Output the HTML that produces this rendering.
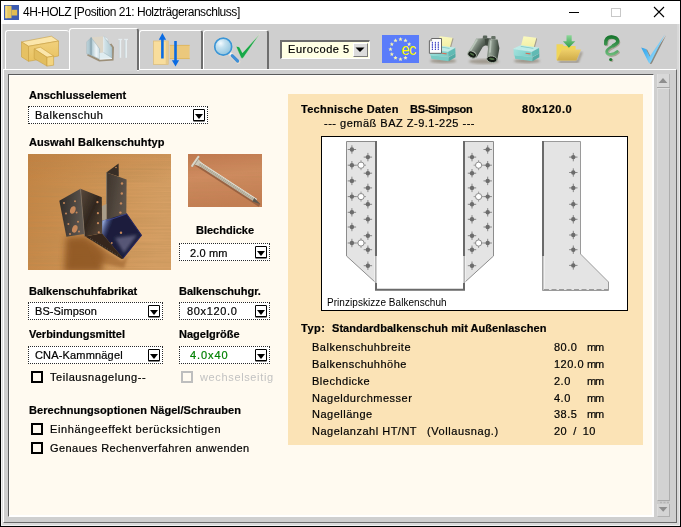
<!DOCTYPE html>
<html><head><meta charset="utf-8">
<style>
*{box-sizing:border-box;margin:0;padding:0}
html,body{width:681px;height:527px;overflow:hidden;background:#cfcfcf}
body{position:relative;font-family:"Liberation Sans",sans-serif;font-size:11px;color:#000}
.abs{position:absolute}
svg{position:absolute;overflow:visible}
#title{position:absolute;left:1px;top:1px;width:679px;height:23px;background:#fff}
#title .t{position:absolute;left:22px;top:4px;font-size:12px;color:#000;white-space:nowrap;letter-spacing:-0.46px;line-height:14px}
.lbl,.txt,.dd,#title .t{will-change:transform}
.txt,.dd{-webkit-text-stroke:0.2px currentColor}
.lbl{-webkit-text-stroke:0.2px #000}
.lbl{position:absolute;font-weight:bold;font-size:11px;white-space:nowrap;line-height:14px}
.txt{position:absolute;font-size:11px;white-space:nowrap;line-height:14px;letter-spacing:0.5px}
.dd{position:absolute;height:18px;padding-top:1px;border:1px dotted #2a2a2a;background:#fff;font-size:11px;line-height:15px;padding-left:6px;white-space:nowrap;letter-spacing:0.5px}
.dd .btn{position:absolute;right:2px;top:2px;width:12px;height:12px;border:1px solid #000;border-radius:1px;box-shadow:0 0.5px 0 #000;background:#fff}
.dd .btn:after{content:"";position:absolute;left:1px;top:3.5px;border-left:4px solid transparent;border-right:4px solid transparent;border-top:5px solid #000}
.cb{position:absolute;width:12px;height:12px;border:2px solid #000;background:#fffaf0}
.tab{position:absolute;top:30px;height:39px;border-left:1px solid #fff;border-top:1px solid #fff;border-right:2px solid #6e6e6e;border-radius:3px 3px 0 0;background:#cfcfcf}
</style></head><body>
<!-- window frame -->
<div class="abs" style="left:0;top:0;width:681px;height:527px;border:1px solid #000"></div>
<div id="title"><div class="t">4H-HOLZ [Position 21: Holzträgeranschluss]</div></div>
<!-- title icon -->
<svg style="left:4px;top:5px" width="15" height="15" viewBox="0 0 15 15"><rect width="15" height="15" fill="#3c5cb2"/><rect x="1.3" y="0.8" width="6.2" height="12.4" fill="#e6c660"/><rect x="7.5" y="4.8" width="5.7" height="5.7" fill="#e0bd52"/><rect x="1.3" y="0.8" width="2" height="12.4" fill="#f2d982"/></svg>
<!-- window controls -->
<div class="abs" style="left:569px;top:12px;width:10px;height:1px;background:#000"></div>
<div class="abs" style="left:611px;top:8px;width:10px;height:9px;border:1px solid #c8c8c8"></div>
<svg style="left:654px;top:7px" width="10" height="10" viewBox="0 0 10 10"><path d="M0 0L10 10M10 0L0 10" stroke="#000" stroke-width="1.1"/></svg>

<!-- left highlight of window -->
<div class="abs" style="left:1px;top:24px;width:1px;height:502px;background:#f2f2f2"></div>
<div class="abs" style="left:2px;top:24px;width:1px;height:502px;background:#dedede"></div>
<div class="abs" style="left:3px;top:523px;width:677px;height:2px;background:#dadada"></div>
<div class="abs" style="left:1px;top:525px;width:679px;height:1px;background:#f0f0f0"></div>
<div class="abs" style="left:677px;top:24px;width:2px;height:501px;background:#d8d8d8"></div>
<div class="abs" style="left:679px;top:24px;width:1px;height:502px;background:#e8e8e8"></div>
<!-- raised frame around content -->
<div class="abs" style="left:3px;top:69px;width:674px;height:454px;border-left:1px solid #fff;border-top:1px solid #fff;border-right:1px solid #6a6a6a;border-bottom:1px solid #6a6a6a"></div>

<!-- tabs -->
<div class="tab" style="left:5px;width:64px;border-right:none"></div>
<div class="tab" style="left:139px;width:64px"></div>
<div class="tab" style="left:203px;width:66px"></div>
<div class="tab" style="left:69px;top:28px;width:70px;height:42px;background:#d3d3d3"></div>
<div class="abs" style="left:70px;top:69px;width:67px;height:2px;background:#d3d3d3"></div>
<div class="abs" style="left:137px;top:70px;width:2px;height:1px;background:#f4f4f4"></div>
<svg style="left:0;top:0" width="681" height="72" viewBox="0 0 681 72">
<defs>
<linearGradient id="gw1" x1="0" y1="0" x2="0" y2="1"><stop offset="0" stop-color="#f1d07c"/><stop offset="1" stop-color="#e8c260"/></linearGradient>
<radialGradient id="glens" cx="0.35" cy="0.3" r="0.75"><stop offset="0" stop-color="#f4fbff"/><stop offset="0.35" stop-color="#c4e1ef"/><stop offset="1" stop-color="#8fc3de"/></radialGradient>
<linearGradient id="gbr" x1="0" y1="0" x2="1" y2="0"><stop offset="0" stop-color="#a6c2cc"/><stop offset="0.6" stop-color="#eff5f7"/><stop offset="1" stop-color="#cbdee5"/></linearGradient><linearGradient id="gbr2" x1="0" y1="0" x2="1" y2="0"><stop offset="0" stop-color="#d6e6eb"/><stop offset="1" stop-color="#aec8d1"/></linearGradient><linearGradient id="gfl" x1="0" y1="0" x2="1" y2="0"><stop offset="0" stop-color="#c4d9e0"/><stop offset="1" stop-color="#96b3be"/></linearGradient>
<linearGradient id="gck" x1="0" y1="0" x2="1" y2="0.6"><stop offset="0" stop-color="#2394e2"/><stop offset="0.45" stop-color="#4db6f2"/><stop offset="0.7" stop-color="#7fcff8"/><stop offset="1" stop-color="#2c9be6"/></linearGradient>
<linearGradient id="gq" gradientUnits="userSpaceOnUse" x1="0" y1="36" x2="0" y2="56"><stop offset="0" stop-color="#16742c"/><stop offset="1" stop-color="#6fbe7e"/></linearGradient>
<linearGradient id="gar" x1="0" y1="0" x2="0" y2="1"><stop offset="0" stop-color="#8ed79a"/><stop offset="1" stop-color="#2f9c48"/></linearGradient>
<linearGradient id="gfo" x1="0" y1="0" x2="0" y2="1"><stop offset="0" stop-color="#efd06a"/><stop offset="1" stop-color="#cfab48"/></linearGradient>
<linearGradient id="gbin" x1="0" y1="0" x2="1" y2="1"><stop offset="0" stop-color="#b9c4b9"/><stop offset="1" stop-color="#5a665a"/></linearGradient>
<linearGradient id="gbl" x1="0.1" y1="0.1" x2="0.9" y2="0.7"><stop offset="0" stop-color="#6a776b"/><stop offset="0.3" stop-color="#a2aea2"/><stop offset="0.65" stop-color="#5f6b60"/><stop offset="1" stop-color="#343e35"/></linearGradient><linearGradient id="gbr3" x1="0" y1="0" x2="1" y2="0.15"><stop offset="0" stop-color="#566257"/><stop offset="0.3" stop-color="#9eaa9e"/><stop offset="0.7" stop-color="#667367"/><stop offset="1" stop-color="#3a443b"/></linearGradient><linearGradient id="gpap" x1="0" y1="0" x2="0.2" y2="1"><stop offset="0" stop-color="#fbfabf"/><stop offset="1" stop-color="#f3efa6"/></linearGradient><linearGradient id="gpf" x1="0" y1="0" x2="1" y2="0.3"><stop offset="0" stop-color="#a2e2dd"/><stop offset="1" stop-color="#7ccfc9"/></linearGradient><filter id="b03"><feGaussianBlur stdDeviation="0.3"/></filter><filter id="b05"><feGaussianBlur stdDeviation="0.5"/></filter>
<filter id="b1"><feGaussianBlur stdDeviation="0.9"/></filter>
</defs>
<!-- tab1: wooden beams -->
<g stroke="#c9a040" stroke-width="0.6" stroke-linejoin="round">
<polygon points="21.5,41.9 51.4,36.2 58.5,41 28.5,46.3" fill="#fbe6ab"/>
<polygon points="21.5,41.9 28.5,46.3 28.5,61.3 21.5,56.9" fill="#e6c163"/>
<polygon points="28.5,46.3 58.5,41 58.5,56 28.5,61.3" fill="url(#gw1)"/>
<polygon points="34.2,48.9 40.4,47.2 53.6,56 47,57.3" fill="#fbe6ab"/>
<polygon points="34.2,48.9 47,57.3 47,66.1 34.2,58.6" fill="#e2bd5e"/>
<polygon points="47,57.3 53.6,56 53.6,65.2 47,66.1" fill="#f3d47f"/>
</g>
<!-- tab2: bracket + nails -->
<g>
<path d="M87.5 54.6L99.4 60.4L112.6 59.6L113 47.5L110.5 44" fill="none" stroke="#9c8f78" stroke-width="2" filter="url(#b05)"/>
<polygon points="91.2,37.5 103.6,36.2 103.6,52.6 99.6,53 99.6,48.9" fill="#ddd6c7"/>
<polygon points="86.8,41.9 91.2,37.5 91.2,55.1 86.8,53.8" fill="url(#gfl)" stroke="#8ea9b4" stroke-width="0.4"/>
<polygon points="91.2,37.5 99.6,48.9 99.6,59.1 91.2,55.1" fill="url(#gbr)" stroke="#8ea9b4" stroke-width="0.4"/>
<polygon points="99.6,53 103.6,52.5 111.9,57.8 111.9,59 99.6,59.3" fill="#dfecf0"/>
<polygon points="103.6,36.2 111.9,47.6 111.9,57.8 103.6,52.5" fill="url(#gbr2)" stroke="#8ea9b4" stroke-width="0.4"/>
<polygon points="103.6,36.2 107.5,38.6 108.6,41.6 105.6,39" fill="#eef4f6" stroke="#9db5be" stroke-width="0.3"/>
<path d="M103.7 36.4V52.4" stroke="#f4f8fa" stroke-width="0.8"/>
<path d="M99.6 59.2L111.9 58.5" stroke="#f4f8fa" stroke-width="0.8"/>
<path d="M91.2 37.6V55" stroke="#7d99a5" stroke-width="0.6"/>
<rect x="118.4" y="38.8" width="3.8" height="1.3" fill="#e4ecef"/><rect x="119.4" y="39.5" width="1.8" height="18.3" fill="#e6eef1"/>
<rect x="124.2" y="38.8" width="3.8" height="1.3" fill="#e4ecef"/><rect x="125.2" y="39.5" width="1.8" height="18.3" fill="#e6eef1"/>
<path d="M119.3 40V57.8M125.1 40V57.8" stroke="#b9cbd2" stroke-width="0.5"/>
</g>
<!-- tab3: wood + arrows -->
<g>
<rect x="153.5" y="41" width="14.7" height="23.4" fill="#f8dd9c" stroke="#dcbb78" stroke-width="0.7"/>
<rect x="165.7" y="41.3" width="2.3" height="22.8" fill="#e6ca8c"/>
<rect x="169.8" y="45" width="19.8" height="14" fill="#ebc87c"/>
<path d="M169.8 45.4H189.6M169.8 58.6H189.6" stroke="#dcb65e" stroke-width="0.9"/>
<path d="M162.4 33.1L166.1 39.8H163.7V58.6H161.1V39.8H158.8Z" fill="#0a6be2"/>
<path d="M175.5 66.6L179.1 60.3H176.8V41H174.2V60.3H171.9Z" fill="#0a6be2"/>
</g>
<!-- tab4: magnifier + check -->
<g>
<path d="M230 53.6L238.2 61.7" stroke="#e8ddd0" stroke-width="4.4" stroke-linecap="round"/>
<circle cx="223.2" cy="46.7" r="9.6" fill="#e9ddd0"/>
<path d="M229.6 53L232 55.4" stroke="#f4f6f8" stroke-width="2.2"/>
<path d="M232.2 55.6L237.6 61" stroke="#3f8fd6" stroke-width="3.2" stroke-linecap="round"/>
<circle cx="223.2" cy="46.7" r="8.5" fill="url(#glens)" stroke="#3b95d6" stroke-width="1.7"/>
<path d="M235.9 46.2L239.4 46.9L242.5 52.8L259.9 33.8L243.4 57.7Q242 59.4 240.8 57.5Z" fill="#16a848" stroke="#e8e0d4" stroke-width="0.5"/>
</g>
<!-- EU flag -->
<rect x="382" y="35" width="37" height="28" fill="#5a7cfa"/>
<g fill="#f6f3b4"><polygon points="400.5,37.0 401.1,38.4 402.6,38.5 401.5,39.5 401.8,41.0 400.5,40.2 399.2,41.0 399.5,39.5 398.4,38.5 399.9,38.4"/><polygon points="405.5,38.3 406.1,39.7 407.6,39.9 406.5,40.8 406.8,42.3 405.5,41.5 404.2,42.3 404.5,40.8 403.4,39.9 404.9,39.7"/><polygon points="409.2,42.0 409.7,43.4 411.3,43.5 410.1,44.5 410.5,46.0 409.2,45.2 407.9,46.0 408.2,44.5 407.1,43.5 408.6,43.4"/><polygon points="405.5,55.7 406.1,57.1 407.6,57.2 406.5,58.2 406.8,59.6 405.5,58.9 404.2,59.6 404.5,58.2 403.4,57.2 404.9,57.1"/><polygon points="400.5,57.0 401.1,58.4 402.6,58.5 401.5,59.5 401.8,61.0 400.5,60.2 399.2,61.0 399.5,59.5 398.4,58.5 399.9,58.4"/><polygon points="395.5,55.7 396.1,57.1 397.6,57.2 396.5,58.2 396.8,59.6 395.5,58.9 394.2,59.6 394.5,58.2 393.4,57.2 394.9,57.1"/><polygon points="391.8,52.0 392.4,53.4 393.9,53.5 392.8,54.5 393.1,56.0 391.8,55.2 390.5,56.0 390.9,54.5 389.7,53.5 391.3,53.4"/><polygon points="390.5,47.0 391.1,48.4 392.6,48.5 391.5,49.5 391.8,51.0 390.5,50.2 389.2,51.0 389.5,49.5 388.4,48.5 389.9,48.4"/><polygon points="391.8,42.0 392.4,43.4 393.9,43.5 392.8,44.5 393.1,46.0 391.8,45.2 390.5,46.0 390.9,44.5 389.7,43.5 391.3,43.4"/><polygon points="395.5,38.3 396.1,39.7 397.6,39.9 396.5,40.8 396.8,42.3 395.5,41.5 394.2,42.3 394.5,40.8 393.4,39.9 394.9,39.7"/></g>
<text x="0" y="55.2" transform="translate(401.4,0) scale(0.88,1)" font-family="Liberation Sans, sans-serif" font-size="16.5" fill="#ffff00" letter-spacing="-0.6">ec</text>
<!-- printer with doc -->
<g>
<use href="#prn" transform="translate(-83.8,0)"/>
<polygon points="431.6,38.5 441.5,38.5 441.5,53.3 429.4,53.3 429.4,40.8" fill="#fdfdfd" stroke="#5a5a5a" stroke-width="0.9" stroke-linejoin="round"/>
<path d="M429.4 40.8H431.6V38.5" fill="#e0e0e0" stroke="#5a5a5a" stroke-width="0.6"/>
<path d="M432.4 42.3V49.4M435.4 42.3V49.4M438.3 42.3V49.4" stroke="#8a90e0" stroke-width="0.6"/>
<g fill="#3238c0"><circle cx="432.4" cy="42.3" r="0.62"/><circle cx="432.4" cy="44.2" r="0.62"/><circle cx="432.4" cy="45.9" r="0.62"/><circle cx="432.4" cy="47.5" r="0.62"/><circle cx="432.4" cy="49.4" r="0.62"/><circle cx="435.4" cy="42.3" r="0.62"/><circle cx="435.4" cy="44.2" r="0.62"/><circle cx="435.4" cy="45.9" r="0.62"/><circle cx="435.4" cy="47.5" r="0.62"/><circle cx="435.4" cy="49.4" r="0.62"/><circle cx="438.3" cy="42.3" r="0.62"/><circle cx="438.3" cy="44.2" r="0.62"/><circle cx="438.3" cy="45.9" r="0.62"/><circle cx="438.3" cy="47.5" r="0.62"/><circle cx="438.3" cy="49.4" r="0.62"/></g>
</g>
<!-- binoculars -->
<g>
<ellipse cx="484" cy="61.5" rx="15" ry="2.4" fill="#8e8576" filter="url(#b1)" opacity="0.7"/>
<g filter="url(#b03)">
<!-- bridge -->
<polygon points="482.7,37.8 491.1,38.5 489.8,46 483.4,45.2" fill="#3c463d"/>
<!-- eyepieces -->
<rect x="482.9" y="35.6" width="4.3" height="3.4" rx="1" fill="#59655a"/>
<rect x="491.2" y="36" width="4.4" height="3.6" rx="1" fill="#667266"/>
<!-- left housing + barrel -->
<polygon points="476.2,38.6 484.6,38.2 485.4,45 482.7,47 476.6,57.6 467.7,52.8 473.6,43.6" fill="url(#gbl)"/>
<!-- right housing + barrel -->
<polygon points="488.8,39.2 497.6,39.6 499.4,48.2 497.2,60.6 486.8,59.8 488,48.8 487.6,45" fill="url(#gbr3)"/>
<path d="M476.8 40L470.6 50.4" stroke="#c3cfc3" stroke-width="1.6" stroke-linecap="round" opacity="0.75"/>
<path d="M490.8 41.4L490 52" stroke="#c3cfc3" stroke-width="1.6" stroke-linecap="round" opacity="0.7"/>
<ellipse cx="472.1" cy="54.6" rx="4.5" ry="3.2" fill="#161d16" stroke="#aab6a8" stroke-width="0.9" transform="rotate(27 472.1 54.6)"/>
<ellipse cx="491.9" cy="59.3" rx="5.2" ry="3.3" fill="#161d16" stroke="#aab6a8" stroke-width="0.9" transform="rotate(8 491.9 59.3)"/>
<ellipse cx="472" cy="54.2" rx="2.4" ry="0.9" fill="#4e6e44" transform="rotate(27 472 54.2)"/>
<ellipse cx="491.8" cy="58.9" rx="2.8" ry="1" fill="#4e6e44" transform="rotate(8 491.8 58.9)"/>
</g>
</g>
<!-- printer 2 -->
<g id="prn">
<ellipse cx="527" cy="61" rx="13" ry="2.2" fill="#8e8576" filter="url(#b1)" opacity="0.75"/>
<path d="M536.6 38.2L534 47.8" stroke="#9c947f" stroke-width="1.6" filter="url(#b05)" opacity="0.8"/>
<polygon points="523.5,36.2 536.4,37.8 533.5,47.9 520.9,45.9" fill="url(#gpap)"/>
<polygon points="514.5,55 532.5,57.3 532.5,61.2 515.1,58.7" fill="#78cbc5"/>
<polygon points="532.5,57.3 539.3,53.4 539.3,57.2 532.5,61.2" fill="#52aaa4"/>
<polygon points="513.5,48.6 520.6,45.2 539,47.5 531.9,51.4" fill="#bdebe7"/>
<polygon points="513.5,48.6 531.9,51.4 532.2,57 513.8,55.6" fill="url(#gpf)"/>
<polygon points="531.9,51.4 539,47.5 539.3,53.5 532.2,57" fill="#60bab4"/>
<path d="M513.6 48.7L531.9 51.5L539 47.6" fill="none" stroke="#d8f4f2" stroke-width="0.5"/>
<polygon points="520.9,45.9 533.5,47.9 533.2,48.8 520.7,46.8" fill="#6fbfba" opacity="0.8"/>
<path d="M525.6 53.2L530.4 53.9" stroke="#d2705a" stroke-width="1.1"/>
</g>
<!-- folder -->
<g>
<path d="M559 62L577.5 62L581.5 52" stroke="#857c6c" stroke-width="2" fill="none" filter="url(#b1)" opacity="0.8"/>
<path d="M556.5 44.3H562.6L563.8 45.9H575.6V60.3H556.5Z" fill="#f0d558"/>
<polygon points="561.7,49.4 581.1,49.4 576.4,60.6 557,60.6" fill="url(#gfo)"/>
<path d="M566.5 35.3H571.7V41.2H575.3L568.9 47.7L562.9 41.2H566.5Z" fill="url(#gar)"/>
</g>
<!-- question -->
<g>
<path d="M605.7 43.8C605.3 38.8 608 36.9 611.4 36.9C615.2 36.9 617.7 38.8 617.7 41.5C617.7 45.6 606.6 46.8 606.6 51.7C606.6 55.6 613.6 55.2 617.3 51.5" fill="none" stroke="#9b917f" stroke-width="3" stroke-linecap="round" transform="translate(1.1,1)" filter="url(#b05)" opacity="0.7"/>
<path d="M605.7 43.8C605.3 38.8 608 36.9 611.4 36.9C615.2 36.9 617.7 38.8 617.7 41.5C617.7 45.6 606.6 46.8 606.6 51.7C606.6 55.6 613.6 55.2 617.3 51.5" fill="none" stroke="url(#gq)" stroke-width="2.7" stroke-linecap="round"/>
<path d="M605.7 43.8C605.3 38.8 608 36.9 611.4 36.9C615.2 36.9 617.7 38.8 617.7 41.5C617.7 43.2 615.6 44.4 613.4 45.6" fill="none" stroke="url(#gq)" stroke-width="3.5" stroke-linecap="round"/>
<circle cx="611.7" cy="60.4" r="1.6" fill="#9b917f" filter="url(#b05)" opacity="0.7"/>
<circle cx="610.7" cy="59.5" r="1.6" fill="#1d7a32"/>
</g>
<!-- blue check -->
<g>
<path d="M641.2 47.6L646 49L649.8 56.5L664.8 34.6L651 62Q649.6 64.4 648.4 62Z" fill="#7a7468" transform="translate(1.2,0.8)" filter="url(#b05)" opacity="0.8"/>
<path d="M641.2 47.6L646 49L649.8 56.5L664.8 34.6L651 62Q649.6 64.4 648.4 62Z" fill="url(#gck)"/>
</g>
</svg>
<!-- eurocode dropdown -->
<div class="abs" style="left:280px;top:40px;width:90px;height:19px;background:#ffffe4;border-top:2px solid #6c6c6c;border-left:2px solid #6c6c6c;border-bottom:1px solid #fff;border-right:1px solid #fff"></div>
<div class="txt" style="left:287.5px;top:42px;letter-spacing:0.55px">Eurocode 5</div>
<div class="abs" style="left:353px;top:43px;width:15px;height:14px;background:#dcdcdc;border-top:1px solid #fff;border-left:1px solid #fff;border-bottom:1px solid #7a7a7a;border-right:1px solid #7a7a7a"></div>
<svg style="left:355px;top:47px" width="10" height="6"><path d="M0.5 0.5H9.5L5 5Z" fill="#000"/></svg>

<!-- panel -->
<div class="abs" id="panel" style="left:8px;top:74px;width:646px;height:443px;background:#fffaf0;border-top:1px solid #5a5a5a;border-left:1px solid #5a5a5a;border-right:1px solid #fff;border-bottom:1px solid #fff;box-shadow:inset 1px 1px 0 #fffefa,inset -1px -1px 0 #fff"></div>
<!-- scrollbar -->
<div class="abs" style="left:657px;top:74px;width:13px;height:443px;background:#cbcbcb"></div>
<div class="abs" style="left:657px;top:74px;width:13px;height:13px;background:#d8d8d8;border-right:1px solid #b8b8b8;border-left:1px solid #dedede"></div>
<div class="abs" style="left:657px;top:87px;width:13px;height:1px;background:#a8a8a8"></div>
<div class="abs" style="left:657px;top:88px;width:13px;height:413px;background:#d2d2d2;border-left:1px solid #dcdcdc;border-top:1px solid #e0e0e0;border-right:1px solid #adadad;border-bottom:1px solid #a8a8a8"></div>
<div class="abs" style="left:657px;top:504px;width:13px;height:13px;background:#d4d4d4;border-right:1px solid #adadad;border-bottom:1px solid #b0b0b0;border-left:1px solid #dcdcdc"></div>
<svg style="left:657px;top:74px" width="13" height="443"><path d="M1.6 8.9L6 4L10.4 8.9Z" fill="#8e8e8e"/><path d="M1.8 433L6.2 437.8L10.4 433Z" fill="#8e8e8e"/><path d="M3 428.5h2M6.5 428.5h2M10 428.5h2" stroke="#b4b4b4" stroke-width="1.4"/></svg>

<div class="lbl" style="left:29px;top:88px">Anschlusselement</div>
<div class="dd" style="left:28px;top:106px;width:180px">Balkenschuh<div class="btn"></div></div>
<div class="lbl" style="left:29px;top:135px;letter-spacing:0.1px">Auswahl Balkenschuhtyp</div>
<svg style="left:28px;top:154px;overflow:hidden" width="143" height="116" viewBox="28 154 143 116">
<defs>
<linearGradient id="p1bg" x1="0" y1="0" x2="1" y2="0.15"><stop offset="0" stop-color="#c48443"/><stop offset="0.5" stop-color="#ce9354"/><stop offset="1" stop-color="#d7a065"/></linearGradient>
<linearGradient id="p1v" x1="0" y1="0" x2="0" y2="1"><stop offset="0" stop-color="#b8743a" stop-opacity="0.25"/><stop offset="0.25" stop-color="#b8743a" stop-opacity="0"/><stop offset="1" stop-color="#b8743a" stop-opacity="0"/></linearGradient>
<linearGradient id="mA" x1="0" y1="0" x2="1" y2="0.2"><stop offset="0" stop-color="#2e2925"/><stop offset="1" stop-color="#5e5750"/></linearGradient>
<linearGradient id="mB" x1="0" y1="0" x2="1" y2="1"><stop offset="0" stop-color="#5a4a3c"/><stop offset="0.5" stop-color="#30261e"/><stop offset="1" stop-color="#5c4a3a"/></linearGradient>
<linearGradient id="mD" x1="0" y1="0" x2="1" y2="0.4"><stop offset="0" stop-color="#3c332b"/><stop offset="1" stop-color="#5f544a"/></linearGradient>
<linearGradient id="mHL" gradientUnits="userSpaceOnUse" x1="102" y1="226" x2="110" y2="229"><stop offset="0" stop-color="#9ab0e4" stop-opacity="0.9"/><stop offset="1" stop-color="#4a5aa0" stop-opacity="0"/></linearGradient>
<filter id="pb1" x="-30%" y="-30%" width="160%" height="160%"><feGaussianBlur stdDeviation="3"/></filter>
<filter id="pb15" x="-30%" y="-30%" width="160%" height="160%"><feGaussianBlur stdDeviation="1.6"/></filter>
<filter id="pb0"><feGaussianBlur stdDeviation="0.45"/></filter><filter id="grain" x="0" y="0" width="100%" height="100%"><feTurbulence type="fractalNoise" baseFrequency="0.012 0.55" numOctaves="2" seed="3"/><feColorMatrix type="matrix" values="0 0 0 0 0.45  0 0 0 0 0.25  0 0 0 0 0.08  0.9 0.9 0 0 -0.62"/></filter>
</defs>
<rect x="28" y="154" width="143" height="116" fill="url(#p1bg)"/>
<rect x="28" y="154" width="143" height="116" fill="url(#p1v)"/>
<rect x="28" y="154" width="143" height="116" filter="url(#grain)" opacity="0.5"/>
<!-- shadow -->
<polygon points="66,237 86,236 104,254 102,272 64,272" fill="#87501f" filter="url(#pb1)" opacity="0.8"/>
<polygon points="88,240 122,261 128,256 124,268 96,262" fill="#955c28" filter="url(#pb15)" opacity="0.55"/>
<g filter="url(#pb0)">
<!-- right flange (top) -->
<polygon points="106.4,172.4 118.6,163.6 118.8,176.5" fill="#372f27"/>
<!-- right wall -->
<polygon points="106.4,172.4 126.6,179.6 126.3,213.6 106.3,220.8" fill="url(#mD)"/>
<path d="M106.6 172.6V220.6" stroke="#8a7f70" stroke-width="0.8"/>
<!-- light strip -->
<polygon points="102,206 106.3,204 106.3,220.8 102.2,222" fill="#a99d8a"/>
<!-- bottom plate -->
<polygon points="102.2,220.8 126.3,213.5 141.4,235.2 122.8,258.4 101.9,233.2" fill="#1d1f3e"/>
<polygon points="102.2,220.8 126.3,213.5 141.4,235.2 122.8,258.4 101.9,233.2" fill="url(#mHL)"/>
<polygon points="115,238 137,235 124,253" fill="#7f7d9c" filter="url(#pb15)" opacity="0.6"/>
<path d="M126.3 213.5L141.4 235.2L122.8 258.4" fill="none" stroke="#23245c" stroke-width="1.1"/>
<path d="M106.3 221L126.3 214" stroke="#3c4a9a" stroke-width="0.8"/>
<!-- front strip -->
<polygon points="85.3,236.5 101.9,233.2 123.4,258.6 121.6,259" fill="#34281e"/>
<path d="M90 238.4L118 255.4" stroke="#8d8478" stroke-width="0.7" stroke-dasharray="0.7 2.2"/>
<!-- left wall -->
<polygon points="80.5,188.8 101.8,197.2 102.2,233.2 84.7,236.6" fill="url(#mB)"/>
<!-- left flange -->
<polygon points="59.3,200.8 80.5,188.8 84.3,234 66.4,236.8" fill="url(#mA)"/>
<path d="M80.5 188.8L84.5 236" stroke="#80766c" stroke-width="0.7"/>
<!-- holes -->
<g fill="#c7885a">
<ellipse cx="72.8" cy="210" rx="2.6" ry="3.9" transform="rotate(20 72.8 210)"/>
<ellipse cx="74.8" cy="228.8" rx="2.6" ry="3.9" transform="rotate(20 74.8 228.8)"/>
<circle cx="64" cy="203" r="1"/><circle cx="75" cy="201.3" r="1"/><circle cx="66" cy="213.6" r="1"/><circle cx="76.6" cy="212.5" r="1"/><circle cx="68.4" cy="224" r="1"/><circle cx="78" cy="221.8" r="1"/><circle cx="70" cy="234" r="1"/><circle cx="79" cy="231.5" r="1"/>
<circle cx="97.4" cy="202.2" r="1.1"/><circle cx="97.9" cy="213.2" r="1.1"/><circle cx="98" cy="223.2" r="1.1"/><circle cx="98.8" cy="232.4" r="1.1"/>
<circle cx="122" cy="183.5" r="1.2"/><circle cx="121.8" cy="193.5" r="1.2"/><circle cx="121" cy="203.4" r="1.2"/><circle cx="120.4" cy="212.6" r="1.2"/>
<circle cx="121" cy="232.8" r="1.2"/><circle cx="116" cy="167.5" r="0.8"/><circle cx="111.8" cy="243" r="0.9"/>
</g>
</g>
</svg>
<svg style="left:188px;top:154px;overflow:hidden" width="74" height="53" viewBox="188 154 74 53">
<defs>
<linearGradient id="p2bg" x1="0" y1="0" x2="0.15" y2="1"><stop offset="0" stop-color="#c0784f"/><stop offset="0.45" stop-color="#cf8b60"/><stop offset="1" stop-color="#c47d53"/></linearGradient>
<linearGradient id="nl" x1="0" y1="0" x2="1" y2="0"><stop offset="0" stop-color="#d9d5c8"/><stop offset="1" stop-color="#b4ae9c"/></linearGradient>
<filter id="pb2"><feGaussianBlur stdDeviation="0.7"/></filter>
</defs>
<rect x="188" y="154" width="74" height="53" fill="url(#p2bg)"/>
<rect x="188" y="154" width="74" height="53" filter="url(#grain)" opacity="0.35"/>
<path d="M196 164.5L259.5 205.4" stroke="#8e5a3c" stroke-width="3" filter="url(#pb2)" opacity="0.8"/>
<polygon points="193.2,164 197.4,158 203,164.3 201.2,167" fill="#cdc8b9"/>
<path d="M199 163.6L256 200.8" stroke="#c0bbaa" stroke-width="3.7"/>
<path d="M199.9 162.3L256.8 199.4" stroke="#e4e1d6" stroke-width="1.1"/>
<path d="M200 164.2L255 200" stroke="#8f8873" stroke-width="3" stroke-dasharray="0.8 1.2" opacity="0.5"/>
<polygon points="254.2,198 260.6,204.2 252.4,201.6" fill="#5c5850"/>
<path d="M192.2 165.8L198.4 156.8" stroke="#dad6c9" stroke-width="2.2" stroke-linecap="round"/>
<path d="M193.2 166.6L199.2 157.8" stroke="#8d8674" stroke-width="0.7"/>
</svg>

<div class="lbl" style="left:196px;top:223px">Blechdicke</div>
<div class="dd" style="left:179px;top:243px;width:91px;padding-left:10px;padding-top:2px;letter-spacing:0.17px">2.0 mm<div class="btn"></div></div>
<div class="lbl" style="left:29px;top:284px">Balkenschuhfabrikat</div>
<div class="lbl" style="left:179px;top:284px">Balkenschuhgr.</div>
<div class="dd" style="left:28px;top:302px;width:135px;letter-spacing:0.07px">BS-Simpson<div class="btn"></div></div>
<div class="dd" style="left:179px;top:302px;width:91px;letter-spacing:0.65px;padding-left:7px">80x120.0<div class="btn"></div></div>
<div class="lbl" style="left:29px;top:327px">Verbindungsmittel</div>
<div class="lbl" style="left:179px;top:327px">Nagelgröße</div>
<div class="dd" style="left:28px;top:346px;width:135px;letter-spacing:0.17px">CNA-Kammnägel<div class="btn"></div></div>
<div class="dd" style="left:179px;top:346px;width:91px;color:#008000;padding-left:10px;letter-spacing:0.9px">4.0x40<div class="btn"></div></div>
<div class="cb" style="left:31px;top:371px"></div>
<div class="txt" style="left:50px;top:370px;letter-spacing:0.55px">Teilausnagelung--</div>
<div class="cb" style="left:180.5px;top:371px;border-color:#bebebe"></div>
<div class="txt" style="left:200px;top:370px;color:#c2c2c2;letter-spacing:0.64px;-webkit-text-stroke:0">wechselseitig</div>
<div class="lbl" style="left:29px;top:403px;letter-spacing:0.07px">Berechnungsoptionen Nägel/Schrauben</div>
<div class="cb" style="left:31px;top:423px"></div>
<div class="txt" style="left:50px;top:422px;letter-spacing:0.62px">Einhängeeffekt berücksichtigen</div>
<div class="cb" style="left:31px;top:442px"></div>
<div class="txt" style="left:50px;top:441px;letter-spacing:0.43px">Genaues Rechenverfahren anwenden</div>

<!-- right info -->
<div class="abs" style="left:288px;top:94px;width:355px;height:351px;background:#fbe3b6"></div>
<div class="lbl" style="left:301px;top:102px;letter-spacing:0.27px">Technische Daten</div>
<div class="lbl" style="left:410px;top:102px;letter-spacing:-0.3px">BS-Simpson</div>
<div class="lbl" style="left:522px;top:102px;letter-spacing:0.55px">80x120.0</div>
<div class="txt" style="left:324px;top:116px">--- gemäß BAZ Z-9.1-225 ---</div>
<div class="abs" style="left:321px;top:136px;width:307px;height:175px;background:#fff;border:1px solid #000"></div>
<div class="abs" style="left:327px;top:297px;font-size:10px;line-height:12px;letter-spacing:0.05px;white-space:nowrap;will-change:transform">Prinzipskizze Balkenschuh</div>
<div class="lbl" style="left:301px;top:321px;letter-spacing:0.5px">Typ:</div>
<div class="lbl" style="left:332px;top:321px;letter-spacing:0.06px">Standardbalkenschuh mit Außenlaschen</div>
<svg style="left:0;top:0" width="681" height="527" viewBox="0 0 681 527">
<polygon points="346.5,141.5 375.5,141.5 375.5,282.5 346.5,256" fill="#e4e4e4" stroke="#8c8c8c" stroke-width="1"/>
<polygon points="464.5,141.5 493.5,141.5 493.5,256 464.5,282.5" fill="#e4e4e4" stroke="#8c8c8c" stroke-width="1"/>
<polygon points="542.5,141.5 580.5,141.5 580.5,254 608.5,282 608.5,290.5 542.5,290.5" fill="#e4e4e4" stroke="#9a9a9a" stroke-width="1" stroke-linejoin="round"/>
<path d="M544 289.5H608" stroke="#9a9a9a" stroke-width="1" stroke-dasharray="5 2.5"/>
<path d="M375 256V282M465 256V282M544 256V289" stroke="#fafafa" stroke-width="1"/>
<path d="M376 256V283M464 256V283M543 256V290" stroke="#a4a4a4" stroke-width="1"/>
<path d="M376 141V256" stroke="#6a6a6a" stroke-width="2"/>
<path d="M464 141V256" stroke="#6a6a6a" stroke-width="2"/>
<path d="M543 141V256" stroke="#6a6a6a" stroke-width="2"/>
<path d="M376 283V289.8H464V283" stroke="#6a6a6a" stroke-width="2" fill="none"/>
<path d="M347.7 149.5H356.1M351.9 145.3V153.7" stroke="#7c7c7c" stroke-width="0.9"/><circle cx="351.9" cy="149.5" r="2.2" fill="#6c6c6c"/>
<path d="M483.5 149.5H491.9M487.7 145.3V153.7" stroke="#7c7c7c" stroke-width="0.9"/><circle cx="487.7" cy="149.5" r="2.2" fill="#6c6c6c"/>
<path d="M347.7 165.2H356.1M351.9 161.0V169.4" stroke="#7c7c7c" stroke-width="0.9"/><circle cx="351.9" cy="165.2" r="2.2" fill="#6c6c6c"/>
<path d="M483.5 165.2H491.9M487.7 161.0V169.4" stroke="#7c7c7c" stroke-width="0.9"/><circle cx="487.7" cy="165.2" r="2.2" fill="#6c6c6c"/>
<path d="M347.7 180.9H356.1M351.9 176.7V185.1" stroke="#7c7c7c" stroke-width="0.9"/><circle cx="351.9" cy="180.9" r="2.2" fill="#6c6c6c"/>
<path d="M483.5 180.9H491.9M487.7 176.7V185.1" stroke="#7c7c7c" stroke-width="0.9"/><circle cx="487.7" cy="180.9" r="2.2" fill="#6c6c6c"/>
<path d="M347.7 196.6H356.1M351.9 192.4V200.8" stroke="#7c7c7c" stroke-width="0.9"/><circle cx="351.9" cy="196.6" r="2.2" fill="#6c6c6c"/>
<path d="M483.5 196.6H491.9M487.7 192.4V200.8" stroke="#7c7c7c" stroke-width="0.9"/><circle cx="487.7" cy="196.6" r="2.2" fill="#6c6c6c"/>
<path d="M347.7 212.3H356.1M351.9 208.1V216.5" stroke="#7c7c7c" stroke-width="0.9"/><circle cx="351.9" cy="212.3" r="2.2" fill="#6c6c6c"/>
<path d="M483.5 212.3H491.9M487.7 208.1V216.5" stroke="#7c7c7c" stroke-width="0.9"/><circle cx="487.7" cy="212.3" r="2.2" fill="#6c6c6c"/>
<path d="M347.7 227.0H356.1M351.9 222.8V231.2" stroke="#7c7c7c" stroke-width="0.9"/><circle cx="351.9" cy="227.0" r="2.2" fill="#6c6c6c"/>
<path d="M483.5 227.0H491.9M487.7 222.8V231.2" stroke="#7c7c7c" stroke-width="0.9"/><circle cx="487.7" cy="227.0" r="2.2" fill="#6c6c6c"/>
<path d="M347.7 243.0H356.1M351.9 238.8V247.2" stroke="#7c7c7c" stroke-width="0.9"/><circle cx="351.9" cy="243.0" r="2.2" fill="#6c6c6c"/>
<path d="M483.5 243.0H491.9M487.7 238.8V247.2" stroke="#7c7c7c" stroke-width="0.9"/><circle cx="487.7" cy="243.0" r="2.2" fill="#6c6c6c"/>
<path d="M363.7 157.1H372.1M367.9 152.9V161.3" stroke="#7c7c7c" stroke-width="0.9"/><circle cx="367.9" cy="157.1" r="2.2" fill="#6c6c6c"/>
<path d="M467.8 157.1H476.2M472.0 152.9V161.3" stroke="#7c7c7c" stroke-width="0.9"/><circle cx="472.0" cy="157.1" r="2.2" fill="#6c6c6c"/>
<path d="M363.7 173.2H372.1M367.9 169.0V177.4" stroke="#7c7c7c" stroke-width="0.9"/><circle cx="367.9" cy="173.2" r="2.2" fill="#6c6c6c"/>
<path d="M467.8 173.2H476.2M472.0 169.0V177.4" stroke="#7c7c7c" stroke-width="0.9"/><circle cx="472.0" cy="173.2" r="2.2" fill="#6c6c6c"/>
<path d="M363.7 187.9H372.1M367.9 183.7V192.1" stroke="#7c7c7c" stroke-width="0.9"/><circle cx="367.9" cy="187.9" r="2.2" fill="#6c6c6c"/>
<path d="M467.8 187.9H476.2M472.0 183.7V192.1" stroke="#7c7c7c" stroke-width="0.9"/><circle cx="472.0" cy="187.9" r="2.2" fill="#6c6c6c"/>
<path d="M363.7 204.3H372.1M367.9 200.1V208.5" stroke="#7c7c7c" stroke-width="0.9"/><circle cx="367.9" cy="204.3" r="2.2" fill="#6c6c6c"/>
<path d="M467.8 204.3H476.2M472.0 200.1V208.5" stroke="#7c7c7c" stroke-width="0.9"/><circle cx="472.0" cy="204.3" r="2.2" fill="#6c6c6c"/>
<path d="M363.7 219.3H372.1M367.9 215.1V223.5" stroke="#7c7c7c" stroke-width="0.9"/><circle cx="367.9" cy="219.3" r="2.2" fill="#6c6c6c"/>
<path d="M467.8 219.3H476.2M472.0 215.1V223.5" stroke="#7c7c7c" stroke-width="0.9"/><circle cx="472.0" cy="219.3" r="2.2" fill="#6c6c6c"/>
<path d="M363.7 235.7H372.1M367.9 231.5V239.9" stroke="#7c7c7c" stroke-width="0.9"/><circle cx="367.9" cy="235.7" r="2.2" fill="#6c6c6c"/>
<path d="M467.8 235.7H476.2M472.0 231.5V239.9" stroke="#7c7c7c" stroke-width="0.9"/><circle cx="472.0" cy="235.7" r="2.2" fill="#6c6c6c"/>
<path d="M363.7 249.7H372.1M367.9 245.5V253.9" stroke="#7c7c7c" stroke-width="0.9"/><circle cx="367.9" cy="249.7" r="2.2" fill="#6c6c6c"/>
<path d="M467.8 249.7H476.2M472.0 245.5V253.9" stroke="#7c7c7c" stroke-width="0.9"/><circle cx="472.0" cy="249.7" r="2.2" fill="#6c6c6c"/>
<path d="M363.7 265.7H372.1M367.9 261.5V269.9" stroke="#7c7c7c" stroke-width="0.9"/><circle cx="367.9" cy="265.7" r="2.2" fill="#6c6c6c"/>
<path d="M467.8 265.7H476.2M472.0 261.5V269.9" stroke="#7c7c7c" stroke-width="0.9"/><circle cx="472.0" cy="265.7" r="2.2" fill="#6c6c6c"/>
<path d="M356.0 165.2H366.0M361.0 160.2V170.2" stroke="#8a8a8a" stroke-width="0.8"/><circle cx="361.0" cy="165.2" r="3.1" fill="#fff" stroke="#808080" stroke-width="0.9"/>
<path d="M473.6 165.2H483.6M478.6 160.2V170.2" stroke="#8a8a8a" stroke-width="0.8"/><circle cx="478.6" cy="165.2" r="3.1" fill="#fff" stroke="#808080" stroke-width="0.9"/>
<path d="M356.0 196.6H366.0M361.0 191.6V201.6" stroke="#8a8a8a" stroke-width="0.8"/><circle cx="361.0" cy="196.6" r="3.1" fill="#fff" stroke="#808080" stroke-width="0.9"/>
<path d="M473.6 196.6H483.6M478.6 191.6V201.6" stroke="#8a8a8a" stroke-width="0.8"/><circle cx="478.6" cy="196.6" r="3.1" fill="#fff" stroke="#808080" stroke-width="0.9"/>
<path d="M356.0 243.0H366.0M361.0 238.0V248.0" stroke="#8a8a8a" stroke-width="0.8"/><circle cx="361.0" cy="243.0" r="3.1" fill="#fff" stroke="#808080" stroke-width="0.9"/>
<path d="M473.6 243.0H483.6M478.6 238.0V248.0" stroke="#8a8a8a" stroke-width="0.8"/><circle cx="478.6" cy="243.0" r="3.1" fill="#fff" stroke="#808080" stroke-width="0.9"/>
<path d="M569.1 157.1H577.5M573.3 152.9V161.3" stroke="#7c7c7c" stroke-width="0.9"/><circle cx="573.3" cy="157.1" r="2.2" fill="#6c6c6c"/>
<path d="M569.1 172.5H577.5M573.3 168.3V176.7" stroke="#7c7c7c" stroke-width="0.9"/><circle cx="573.3" cy="172.5" r="2.2" fill="#6c6c6c"/>
<path d="M569.1 187.9H577.5M573.3 183.7V192.1" stroke="#7c7c7c" stroke-width="0.9"/><circle cx="573.3" cy="187.9" r="2.2" fill="#6c6c6c"/>
<path d="M569.1 204.3H577.5M573.3 200.1V208.5" stroke="#7c7c7c" stroke-width="0.9"/><circle cx="573.3" cy="204.3" r="2.2" fill="#6c6c6c"/>
<path d="M569.1 219.3H577.5M573.3 215.1V223.5" stroke="#7c7c7c" stroke-width="0.9"/><circle cx="573.3" cy="219.3" r="2.2" fill="#6c6c6c"/>
<path d="M569.1 235.0H577.5M573.3 230.8V239.2" stroke="#7c7c7c" stroke-width="0.9"/><circle cx="573.3" cy="235.0" r="2.2" fill="#6c6c6c"/>
<path d="M569.1 249.7H577.5M573.3 245.5V253.9" stroke="#7c7c7c" stroke-width="0.9"/><circle cx="573.3" cy="249.7" r="2.2" fill="#6c6c6c"/>
<path d="M569.1 265.4H577.5M573.3 261.2V269.6" stroke="#7c7c7c" stroke-width="0.9"/><circle cx="573.3" cy="265.4" r="2.2" fill="#6c6c6c"/>
</svg>
<div class="txt" style="left:312px;top:340px">Balkenschuhbreite</div><div class="txt" style="left:554px;top:340px">80.0</div><div class="txt" style="left:587px;top:340px;letter-spacing:-1.2px">mm</div>
<div class="txt" style="left:312px;top:357px">Balkenschuhhöhe</div><div class="txt" style="left:554px;top:357px">120.0</div><div class="txt" style="left:587px;top:357px;letter-spacing:-1.2px">mm</div>
<div class="txt" style="left:312px;top:374px">Blechdicke</div><div class="txt" style="left:554px;top:374px">2.0</div><div class="txt" style="left:587px;top:374px;letter-spacing:-1.2px">mm</div>
<div class="txt" style="left:312px;top:391px">Nageldurchmesser</div><div class="txt" style="left:554px;top:391px">4.0</div><div class="txt" style="left:587px;top:391px;letter-spacing:-1.2px">mm</div>
<div class="txt" style="left:312px;top:407px">Nagellänge</div><div class="txt" style="left:554px;top:407px">38.5</div><div class="txt" style="left:587px;top:407px;letter-spacing:-1.2px">mm</div>
<div class="txt" style="left:312px;top:424px">Nagelanzahl HT/NT</div><div class="txt" style="left:554px;top:424px;word-spacing:2.4px">20 / 10</div>
<div class="txt" style="left:427px;top:424px;letter-spacing:0.58px">(Vollausnag.)</div>
</body></html>
